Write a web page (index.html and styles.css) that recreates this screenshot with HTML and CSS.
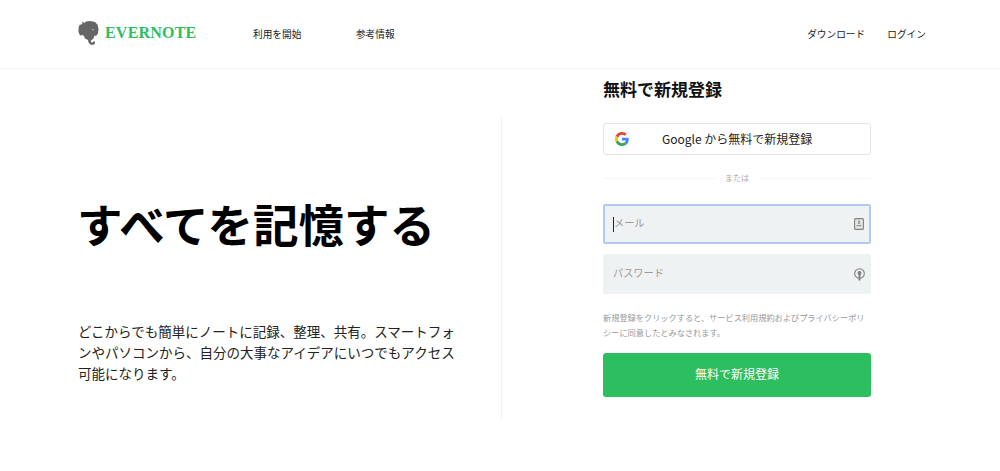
FILE: index.html
```html
<!DOCTYPE html>
<html lang="ja">
<head>
<meta charset="utf-8">
<title>Evernote</title>
<link rel="stylesheet" href="styles.css">
</head>
<body>
<header class="header">
  <div class="logo">
    <svg class="logo-icon" viewBox="0 0 21 24" width="21" height="24"><path fill="#666" d="M4 0.500 L4.500 3 L1.500 4 L0.500 7 L0.500 11 L2 14.500 L4.500 14 L6 15 L7 17.500 L10 19 L10.500 21.500 L12.500 23.800 L15.500 23.800 L17 22.500 L17 20.500 L15 20.500 L14.500 21.800 L13 21 L13 19.500 L15.500 17.500 L16.500 14.500 L18 15 L20 12.500 L20.500 8 L19.500 3.500 L17 1 L12 0 L8 0.500 L6.500 2 Z"/><path d="M13.500 8.500 L15.500 8 L15.500 9.500 Z" fill="#ddd"/></svg>
    <span class="logo-text">EVERNOTE</span>
  </div>
  <nav class="nav-main">
    <a class="nav-link">利用を開始</a>
    <a class="nav-link">参考情報</a>
  </nav>
  <nav class="nav-side">
    <a class="nav-link">ダウンロード</a>
    <a class="nav-link">ログイン</a>
  </nav>
</header>
<main class="main">
  <section class="hero">
    <h1 class="hero-title">すべてを記憶する</h1>
    <p class="hero-text">どこからでも簡単にノートに記録、整理、共有。スマートフォンやパソコンから、自分の大事なアイデアにいつでもアクセス可能になります。</p>
  </section>
  <section class="signup">
    <h2 class="signup-title">無料で新規登録</h2>
    <button class="google-btn">
      <svg class="google-icon" viewBox="0 0 48 48" width="14" height="14"><path fill="#EA4335" d="M24 9.500c3.500 0 6.700 1.200 9.200 3.600l6.900-6.900C35.900 2.400 30.500 0 24 0 14.600 0 6.500 5.400 2.600 13.200l8 6.200C12.500 13.700 17.800 9.500 24 9.500z"/><path fill="#4285F4" d="M47 24.500c0-1.600-.1-3.100-.4-4.500H24v9h13c-.6 3-2.300 5.500-4.800 7.200l7.700 6c4.500-4.200 7.100-10.300 7.100-17.700z"/><path fill="#FBBC05" d="M10.500 28.600c-.5-1.400-.8-3-.8-4.600s.3-3.200.8-4.600l-8-6.200C.9 16.500 0 20.100 0 24s.9 7.500 2.600 10.800l7.900-6.200z"/><path fill="#34A853" d="M24 48c6.500 0 11.900-2.100 15.900-5.800l-7.700-6c-2.200 1.400-4.900 2.300-8.200 2.300-6.200 0-11.500-4.200-13.400-9.900l-8 6.200C6.500 42.600 14.600 48 24 48z"/></svg>
      <span class="google-label">Google から無料で新規登録</span>
    </button>
    <div class="divider"><span class="divider-text">または</span></div>
    <div class="field field-focus">
      <span class="caret"></span><span class="placeholder">メール</span>
      <svg class="field-icon" viewBox="0 0 10 12" width="10" height="12"><rect x="0.600" y="0.600" width="8.800" height="10.800" rx="1" fill="#e4e6e6" stroke="#808080" stroke-width="1.100"/><path d="M5 2.500v3.500" stroke="#808080" stroke-width="1.400"/><path d="M2.500 7.200h5v1h-5z" fill="#808080"/></svg>
    </div>
    <div class="field">
      <span class="placeholder">パスワード</span>
      <svg class="field-icon" viewBox="0 0 11 13" width="11" height="13"><circle cx="5.500" cy="5.500" r="4.800" fill="none" stroke="#808080" stroke-width="1.100"/><circle cx="5.500" cy="5" r="2" fill="#808080"/><path d="M4.500 5.500h2v7h-2z" fill="#808080"/></svg>
    </div>
    <p class="terms">新規登録をクリックすると、サービス利用規約およびプライバシーポリシーに同意したとみなされます。</p>
    <button class="submit-btn"><span class="submit-label">無料で新規登録</span></button>
  </section>
</main>
</body>
</html>
```
FILE: styles.css
```css
* { box-sizing: border-box; }
html, body { margin: 0; height: 100%; }
body {
  background: #fff;
  color: #111;
  font-family: "Noto Sans CJK JP", "Noto Sans", sans-serif;
  overflow: hidden;
}
.header {
  display: flex;
  align-items: center;
  height: 69px;
  padding: 0 74px 2px 78px;
  border-bottom: 1px solid #f4f4f4;
}
.logo { display: flex; align-items: center; gap: 6px; width: 175px; }
.logo-icon { flex: none; }
.logo-text {
  font-family: "Liberation Serif", serif;
  font-weight: 700;
  font-size: 16px;
  letter-spacing: 0.2px;
  color: #2dbe60;
  white-space: nowrap;
}
.nav-main { display: flex; gap: 54.5px; flex: 1; margin-top: 2px; }
.nav-side { display: flex; gap: 22px; margin-top: 2px; }
.nav-link { font-size: 9.7px; color: #222; white-space: nowrap; }
.main { display: flex; padding: 0 129px 0 78px; }
.hero { width: 424px; height: 351px; padding-top: 46px; position: relative; }
.hero::after {
  content: "";
  position: absolute;
  right: 0;
  top: 47px;
  bottom: 0;
  width: 1px;
  background: #f2f2f2;
}
.hero-title {
  margin: 76px 0 0 -1px;
  font-size: 45.5px;
  font-weight: 700;
  line-height: 64px;
  color: #000;
  white-space: nowrap;
}
.hero-text {
  margin: 66px 0 0;
  width: 380px;
  font-size: 13.5px;
  line-height: 21px;
  color: #222;
}
.signup { margin-left: 101px; width: 268px; }
.signup-title {
  margin: 8px 0 0;
  font-size: 17px;
  font-weight: 700;
  line-height: 24px;
  color: #111;
}
.google-btn {
  display: flex;
  align-items: center;
  width: 100%;
  height: 32px;
  margin-top: 22px;
  padding: 0 0 2px 11px;
  background: #fff;
  border: 1px solid #e3e5e7;
  border-radius: 3px;
  font: inherit;
  cursor: pointer;
}
.google-icon { flex: none; margin-top: 2px; }
.google-label { margin-left: 33px; font-size: 12px; color: #222; white-space: nowrap; }
.divider {
  display: flex;
  align-items: center;
  justify-content: center;
  height: 1px;
  margin-top: 23px;
  background: #f6f6f6;
}
.divider-text { padding: 0 9px 2px; background: #fff; font-size: 8px; color: #aaa; line-height: 12px; }
.field {
  display: flex;
  align-items: center;
  height: 40px;
  padding: 0 6px 0 10px;
  background: #eff2f3;
  border-radius: 2px;
}
.field-focus { margin-top: 25px; border: 2px solid #aecbf5; padding: 0 5px 0 8px; }
.field + .field { margin-top: 10px; }
.caret { width: 1px; height: 15px; background: #222; }
.placeholder { flex: 1; font-size: 10.2px; color: #999; padding-bottom: 3px; }
.field-icon { flex: none; }
.terms {
  margin: 16px 0 0;
  font-size: 8.2px;
  line-height: 15px;
  color: #999;
}
.submit-btn {
  display: block;
  width: 100%;
  height: 44px;
  margin-top: 12.500px;
  padding: 0 0 5px;
  background: #2dbe60;
  border: 0;
  border-radius: 3px;
  font: inherit;
  color: #fff;
  cursor: pointer;
}
.submit-label { font-size: 12px; }
```
